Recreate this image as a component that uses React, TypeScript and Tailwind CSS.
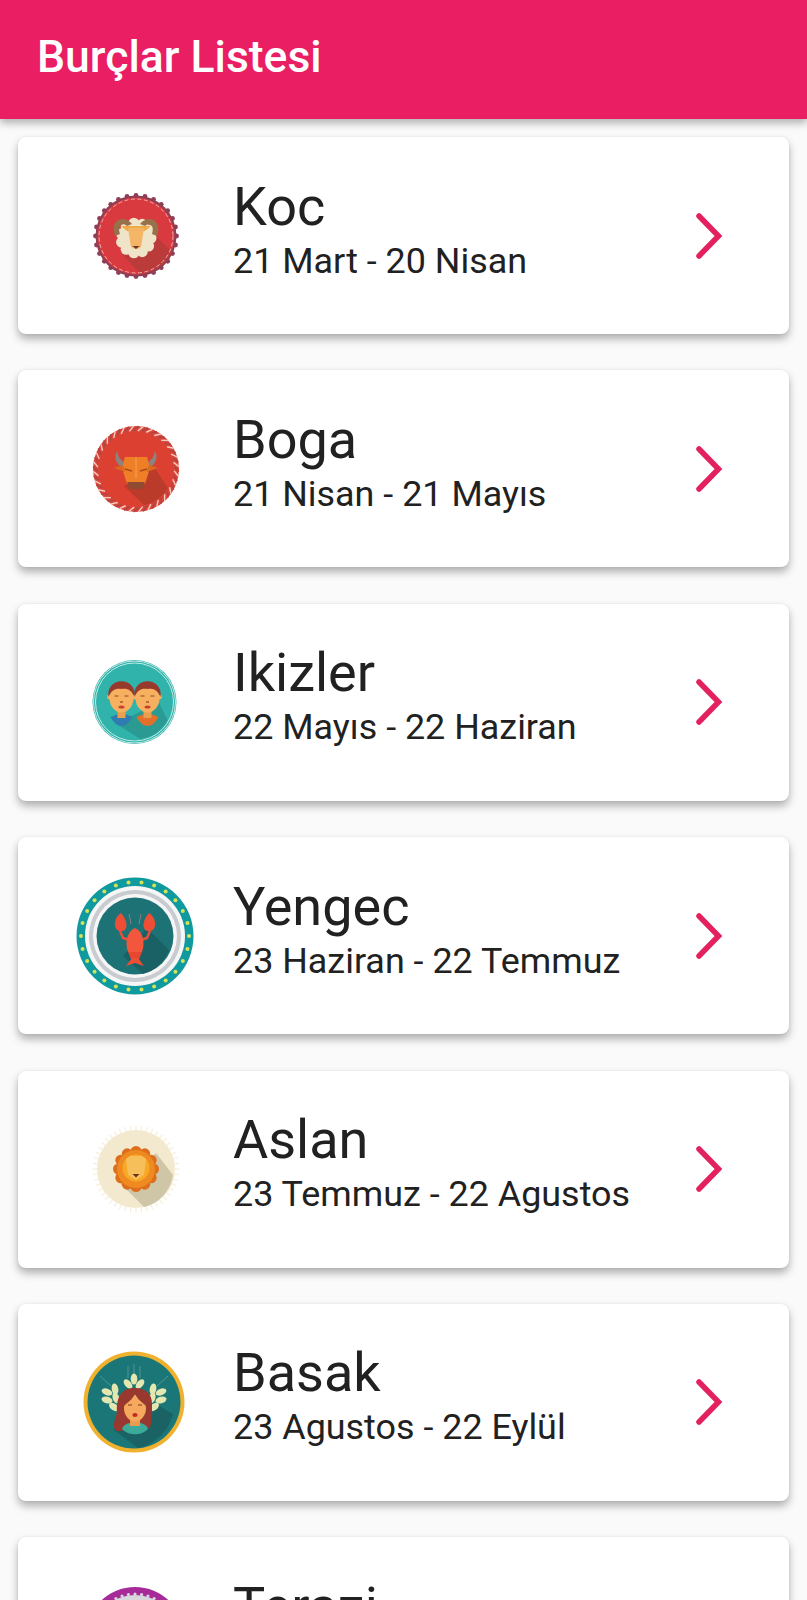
import type { ReactNode } from "react";

function Badge({ children, size = 120 }: { children: ReactNode; size?: number }) {
  return (
    <svg width={size} height={size} viewBox="0 0 120 120" className="block">
      {children}
    </svg>
  );
}

function ring(count: number, r: number, fn: (x: number, y: number, deg: number, i: number) => ReactNode) {
  return Array.from({ length: count }, (_, i) => {
    const deg = (i * 360) / count;
    const a = (deg * Math.PI) / 180;
    return fn(60 + r * Math.cos(a), 60 + r * Math.sin(a), deg, i);
  });
}

function AriesIcon() {
  return (
    <Badge>
      {ring(28, 40.5, (x, y, _d, i) => <circle key={i} cx={x} cy={y} r={2.4} fill="#8e3f56" />)}
      <circle cx="60" cy="60" r="40.5" fill="#8e3f56" />
      <circle cx="60" cy="60" r="38.5" fill="#d93a3f" />
      <path d="M78 58 L96 76 A38.5 38.5 0 0 1 64 98 L46 78 Z" fill="#bb3a3a" />
      <circle cx="60" cy="60" r="37" fill="none" stroke="#f3c9c4" strokeWidth="0.8" strokeDasharray="4 2.5" />
      <circle cx="60" cy="62" r="15" fill="#efe3c8" />
      {ring(11, 15, (x, y, _d, i) => <circle key={i} cx={x} cy={y + 2} r={5.5} fill="#efe3c8" />)}
      <path d="M39 60 C33 44 48 38 56 48 L51 50 C47 46 41 49 44 58 Z" fill="#97714a" />
      <path d="M81 60 C87 44 72 38 64 48 L69 50 C73 46 79 49 76 58 Z" fill="#97714a" />
      <path d="M45 50 H75 L69 55 H51 Z" fill="#f1ab46" />
      <path d="M52 52 H68 L65 71 Q60 75 55 71 Z" fill="#f4b566" />
      <path d="M56.5 70 H63.5 L60 73 Z" fill="#6b3426" />
    </Badge>
  );
}

function TaurusIcon() {
  return (
    <Badge>
      <circle cx="60" cy="60" r="43" fill="#d9433a" />
      {ring(56, 40.5, (x, y, d, i) => (
        <rect key={i} x={x - 3.4} y={y - 0.7} width="6.8" height="1.4" fill={i % 2 ? "#f6cdbd" : "#a9473f"} transform={`rotate(${d + 45} ${x} ${y})`} />
      ))}
      <circle cx="60" cy="60" r="37" fill="#dc4030" />
      <path d="M78 58 L92 79 A37 37 0 0 1 68 96 L48 77 Z" fill="#bb3b2b" />
      <path d="M41 42 C42 49 46 53 51 54 L47 59 C41 56 37 49 41 42 Z" fill="#8d827c" />
      <path d="M79 42 C78 49 74 53 69 54 L73 59 C79 56 83 49 79 42 Z" fill="#8d827c" />
      <path d="M49 48 H71 L74 59 L69 75 H51 L46 59 Z" fill="#ef7f26" />
      <path d="M38 59 L47 56 L49 63 Z M82 59 L73 56 L71 63 Z" fill="#d8691f" />
      <path d="M60 48 V69" stroke="#f4a158" strokeWidth="1" />
      <path d="M49 60 L56 62 M71 60 L64 62" stroke="#a84a1a" strokeWidth="1.5" />
      <path d="M51 73 H69 L66 80 H54 Z" fill="#8f4a32" />
    </Badge>
  );
}

function GeminiHead({ cx, shirt }: { cx: number; shirt: string }) {
  return (
    <g>
      <path d={`M${cx - 11} 75 Q${cx} 69 ${cx + 11} 75 Q${cx + 6} 84 ${cx} 84 Q${cx - 6} 84 ${cx - 11} 75 Z`} fill={shirt} />
      <rect x={cx - 4} y={66} width="8" height="10" fill="#e99f4e" />
      <circle cx={cx - 12} cy={55} r="2.4" fill="#f6b060" />
      <circle cx={cx + 12} cy={55} r="2.4" fill="#f6b060" />
      <ellipse cx={cx} cy={56} rx={12} ry={14.5} fill="#f6b060" />
      <path d={`M${cx - 13} 55 C${cx - 16} 34 ${cx + 16} 34 ${cx + 13} 55 C${cx + 10} 48 ${cx + 6} 46 ${cx} 47 C${cx - 6} 46 ${cx - 10} 48 ${cx - 13} 55 Z`} fill="#98392d" />
      <path d={`M${cx - 7} 54 h4 M${cx + 3} 54 h4`} stroke="#8a4a22" strokeWidth="1.1" />
      <path d={`M${cx - 1.5} 60 h3`} stroke="#8a4a22" strokeWidth="1.2" />
      <ellipse cx={cx} cy={65} rx="3" ry="1.5" fill="#c9402f" />
    </g>
  );
}

function GeminiIcon() {
  return (
    <Badge>
      <g transform="translate(-1.5 0)">
        <circle cx="60" cy="60" r="42" fill="#2fb3ab" />
        <circle cx="60" cy="60" r="41" fill="none" stroke="#c3ebe6" strokeWidth="1" />
        <circle cx="60" cy="60" r="39" fill="none" stroke="#c3ebe6" strokeWidth="1" />
        <path d="M84 60 L93 78 A38 38 0 0 1 66 97 L42 82 Z" fill="#2b9a92" />
        <GeminiHead cx={47} shirt="#2f7cb0" />
        <GeminiHead cx={73} shirt="#e2702a" />
      </g>
    </Badge>
  );
}

function CancerIcon() {
  return (
    <Badge>
      <g transform="translate(-1 0)">
        <circle cx="60" cy="60" r="58.5" fill="#0f9aa0" />
        {ring(26, 54, (x, y, _d, i) => <circle key={i} cx={x} cy={y} r={2} fill="#d9e052" />)}
        <circle cx="60" cy="60" r="50" fill="#f6f6f6" />
        <circle cx="60" cy="60" r="46" fill="#c8ccd0" />
        <circle cx="60" cy="60" r="42" fill="#f6f6f6" />
        <circle cx="60" cy="60" r="38.5" fill="#1d7276" />
        <path d="M72 52 L94 74 A38.5 38.5 0 0 1 68 98 L48 80 Z" fill="#196164" />
        <path d="M56 48 L54 38 M64 48 L66 38" stroke="#8b7f76" strokeWidth="1" fill="none" />
        <path d="M46 37 C38 42 38 54 45 55 C53 56 54 46 46 37 Z" fill="#ee4e36" />
        <path d="M74 37 C82 42 82 54 75 55 C67 56 66 46 74 37 Z" fill="#ee4e36" />
        <path d="M45 55 L48 62 L54 64 M75 55 L72 62 L66 64" stroke="#ee4e36" strokeWidth="2.4" fill="none" />
        <path d="M60 52 C69 56 70 68 67 76 H53 C50 68 51 56 60 52 Z" fill="#f2563c" />
        <path d="M53 76 H67 L64 83 H56 Z" fill="#e8472f" />
        <path d="M51 90 L57 82 H63 L69 90 L60 87 Z" fill="#ee4e36" />
      </g>
    </Badge>
  );
}

function LeoIcon() {
  return (
    <Badge>
      {ring(48, 41, (x, y, d, i) => (
        <rect key={i} x={x - 2.5} y={y - 0.6} width="5" height="1.2" fill="#f8efd9" transform={`rotate(${d} ${x} ${y})`} />
      ))}
      <circle cx="60" cy="60" r="39" fill="#f3e9cf" />
      <path d="M80 44 L97 66 A39 39 0 0 1 68 98 L44 74 Z" fill="#cfc6a8" />
      {ring(12, 17.5, (x, y, _d, i) => <circle key={i} cx={x} cy={y} r={5.5} fill="#dd6e1c" />)}
      <circle cx="60" cy="60" r="19" fill="#ee8a1f" />
      <circle cx="60" cy="59" r="13.5" fill="#f6a928" />
      <path d="M50 50 L54 47 L66 47 L70 50 L68 66 L60 71 L52 66 Z" fill="#f7bf5a" />
      <path d="M56.5 65 H63.5 L60 68.5 Z" fill="#6d3517" />
    </Badge>
  );
}

function Leaf({ x, y, rot }: { x: number; y: number; rot: number }) {
  return <ellipse cx={x} cy={y} rx="5.6" ry="3.3" fill="#e5e7b0" transform={`rotate(${rot} ${x} ${y})`} />;
}

function VirgoIcon() {
  return (
    <Badge>
      <g transform="translate(-2 0)">
        <circle cx="60" cy="60" r="50.5" fill="#f0b22e" />
        <circle cx="60" cy="60" r="46.5" fill="#1b7678" />
        <path d="M82 62 L99 72 A46.5 46.5 0 0 1 64 106 L40 88 Z" fill="#1a6263" />
        <path d="M60 22 V36 M54 24 V36 M66 24 V36 M26 34 L37 44 M94 34 L83 44" stroke="#5f9f9a" strokeWidth="0.8" />
        <Leaf x={60} y={37} rot={90} />
        <Leaf x={54} y={42} rot={50} />
        <Leaf x={66} y={42} rot={-50} />
        <Leaf x={33} y={50} rot={20} />
        <Leaf x={41} y={47} rot={80} />
        <Leaf x={33} y={58} rot={15} />
        <Leaf x={42} y={56} rot={70} />
        <Leaf x={40} y={65} rot={35} />
        <Leaf x={87} y={50} rot={-20} />
        <Leaf x={79} y={47} rot={-80} />
        <Leaf x={87} y={58} rot={-15} />
        <Leaf x={78} y={56} rot={-70} />
        <Leaf x={80} y={65} rot={-35} />
        <path d="M60 46 C47 46 42 56 43 70 C42 76 40 78 40 84 C40 90 46 90 50 88 L76 86 C78 78 78 70 78 62 C78 52 72 46 60 46 Z" fill="#98382e" />
        <path d="M48 87 C50 78 72 78 74 87 C68 94 54 94 48 87 Z" fill="#3ca99b" />
        <rect x="56" y="74" width="10" height="10" fill="#e99c4f" />
        <ellipse cx="61" cy="66" rx="11" ry="13.5" fill="#f6a95e" />
        <path d="M50 64 C54 60 58 58 61 52 C64 58 68 60 72 64 C72 54 67 49 61 49 C55 49 50 54 50 64 Z" fill="#98382e" />
        <path d="M54 63 h4 M64 63 h4" stroke="#7a3a22" strokeWidth="1.1" />
        <ellipse cx="61" cy="73" rx="2.6" ry="2" fill="#c42e22" />
      </g>
    </Badge>
  );
}

function LibraIcon() {
  return (
    <Badge>
      <circle cx="59" cy="60" r="49" fill="#a62a97" />
      {ring(40, 42, (x, y, _d, i) => <circle key={i} cx={x - 1} cy={y} r={1.6} fill="#d8d8dc" />)}
      <circle cx="59" cy="60" r="41" fill="#d8d8dc" />
    </Badge>
  );
}

const signs = [
  { name: "Koc", dates: "21 Mart - 20 Nisan", icon: <AriesIcon /> },
  { name: "Boga", dates: "21 Nisan - 21 Mayıs", icon: <TaurusIcon /> },
  { name: "Ikizler", dates: "22 Mayıs - 22 Haziran", icon: <GeminiIcon /> },
  { name: "Yengec", dates: "23 Haziran - 22 Temmuz", icon: <CancerIcon /> },
  { name: "Aslan", dates: "23 Temmuz - 22 Agustos", icon: <LeoIcon /> },
  { name: "Basak", dates: "23 Agustos - 22 Eylül", icon: <VirgoIcon /> },
  { name: "Terazi", dates: "", icon: <LibraIcon /> },
];

function SignCard({ name, dates, icon }: { name: string; dates: string; icon: ReactNode }) {
  return (
    <div className="flex h-[197px] shrink-0 items-center rounded-[8px] bg-white pl-[58px] pr-[64px] shadow-[0_5px_9px_rgba(0,0,0,0.3),0_0_2px_rgba(0,0,0,0.08)]">
      <div className="w-[120px] shrink-0 blur-[0.5px]">{icon}</div>
      <div className="ml-[37px] min-w-0 flex-1 pb-[9px]">
        <div className="h-[54px] text-[54px] leading-[54px] text-[#212121]">{name}</div>
        <div className="mt-[5px] h-[44px] whitespace-nowrap text-[35.9px] leading-[44px] text-[#212121]">{dates}</div>
      </div>
      <svg width="32" height="48" viewBox="0 0 32 48" fill="none" className="shrink-0">
        <path d="M6 4 L25.5 24 L6 44" stroke="#e3215f" strokeWidth="5.5" strokeLinecap="round" strokeLinejoin="miter" />
      </svg>
    </div>
  );
}

export default function App() {
  return (
    <div className="flex h-[1600px] w-[807px] flex-col overflow-hidden bg-[#fafafa] font-[Roboto,sans-serif]">
      <header className="relative z-10 flex h-[119px] shrink-0 items-center bg-[#e91e63] pb-[4px] pl-[37px] shadow-[0_4px_8px_rgba(0,0,0,0.3)]">
        <h1 className="text-[44.5px] font-medium text-white">Burçlar Listesi</h1>
      </header>
      <main className="flex flex-col gap-[36.4px] px-[18px] pt-[18px]">
        {signs.map((s) => (
          <SignCard key={s.name} {...s} />
        ))}
      </main>
    </div>
  );
}
